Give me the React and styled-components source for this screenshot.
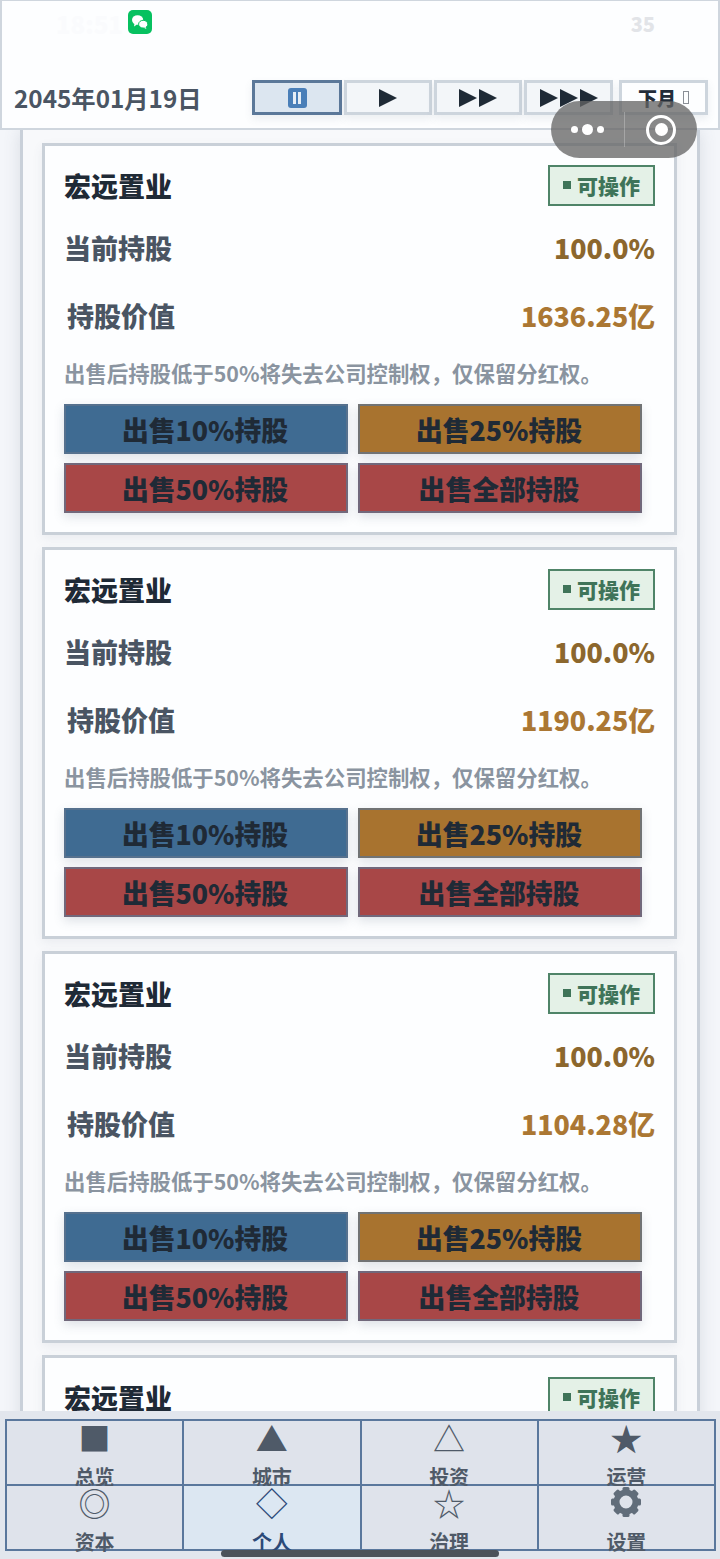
import React from 'react';
import styled, { createGlobalStyle } from 'styled-components';

const GlobalStyle = createGlobalStyle`
  html, body {
    margin: 0;
    padding: 0;
    background: #f3f6fa;
  }
  * {
    box-sizing: border-box;
  }
`;

const Page = styled.div`
  position: relative;
  width: 720px;
  height: 1559px;
  overflow: hidden;
  display: flex;
  flex-direction: column;
  background: #f4f6fa;
  font-family: "Noto Sans CJK SC", "Noto Sans", sans-serif;
  font-weight: 900;
`;

const Header = styled.header`
  position: relative;
  z-index: 1;
  height: 130px;
  flex: none;
  background: #fdfeff;
  border: 2px solid #cfd6de;
  border-top-width: 1px;
  display: flex;
  flex-direction: column;
`;

const StatusBar = styled.div`
  height: 79px;
  padding: 9px 63px 0 54px;
  display: flex;
  align-items: flex-start;
  gap: 5px;
`;

const Clock = styled.span`
  font-size: 24px;
  line-height: 28px;
  color: #fafbfd;
`;

const Battery = styled.span`
  margin-left: auto;
  font-size: 20px;
  line-height: 28px;
  color: #e2e4e8;
`;

const ControlRow = styled.div`
  display: flex;
  align-items: flex-start;
  padding: 0 10px 0 12px;
`;

const DateText = styled.div`
  width: 238px;
  font-size: 24.3px;
  font-weight: 700;
  line-height: 36px;
  color: #4a5563;
`;

const SpeedButtons = styled.div`
  display: flex;
  gap: 2px;
`;

const SpeedButton = styled.div`
  width: ${p => p.$width}px;
  height: 35px;
  display: flex;
  align-items: center;
  justify-content: center;
  background: ${p => (p.$active ? '#dce6f0' : '#f3f6f9')};
  border: 3px solid ${p => (p.$active ? '#5b7899' : '#cdd5dd')};
  box-shadow: 0 4px 8px rgba(80, 95, 115, 0.1);
`;

const NextButton = styled(SpeedButton)`
  margin-left: 6px;
  gap: 7px;
  background: #fdfeff;
  font-size: 19px;
  color: #232d39;
`;

const MissingGlyph = styled.span`
  width: 6px;
  height: 13px;
  border: 1px solid #8a8f96;
`;

const PauseBadge = styled.span`
  width: 19px;
  height: 20px;
  border-radius: 3px;
  background: #4a7fb8;
  display: flex;
  align-items: center;
  justify-content: center;
  gap: 2px;
  i {
    width: 3px;
    height: 12px;
    background: #e6eef6;
  }
`;

const Capsule = styled.div`
  position: absolute;
  z-index: 2;
  left: 551px;
  top: 101px;
  width: 146px;
  height: 57px;
  border-radius: 29px;
  background: rgba(100, 100, 100, 0.76);
  display: flex;
  align-items: center;
`;

const CapsuleDots = styled.div`
  width: 74px;
  height: 35px;
  display: flex;
  align-items: center;
  justify-content: center;
  gap: 4px;
  border-right: 1px solid rgba(255, 255, 255, 0.25);
`;

const Dot = styled.span`
  width: ${p => p.$size}px;
  height: ${p => p.$size}px;
  border-radius: 50%;
  background: #fff;
`;

const CapsuleTarget = styled.div`
  margin-left: 21px;
  width: 30px;
  height: 30px;
  border-radius: 50%;
  border: 3px solid #fff;
  display: flex;
  align-items: center;
  justify-content: center;
  &::after {
    content: '';
    width: 13px;
    height: 13px;
    border-radius: 50%;
    background: #fff;
  }
`;

const Panel = styled.main`
  flex: 1;
  min-height: 0;
  overflow: hidden;
  margin: 0 20px;
  padding: 13px 20px 0 19px;
  background: #f8f9fb;
  border-left: 3px solid #c9d0d9;
  border-right: 3px solid #c9d0d9;
  display: flex;
  flex-direction: column;
  gap: 12px;
  box-shadow: 0 0 16px rgba(80, 95, 115, 0.16);
`;

const Card = styled.section`
  flex: none;
  width: 635px;
  height: 392px;
  padding: 19px 19px;
  background: #fdfeff;
  border: 3px solid #c9d0d8;
  box-shadow: 0 4px 10px rgba(80, 95, 115, 0.08);
  display: flex;
  flex-direction: column;
`;

const TitleRow = styled.div`
  height: 41px;
  flex: none;
  display: flex;
  align-items: center;
  justify-content: space-between;
`;

const Title = styled.h3`
  margin: 0;
  font-size: 27px;
  line-height: 40px;
  font-weight: 900;
  color: #1f2a36;
`;

const Badge = styled.span`
  width: 107px;
  height: 41px;
  padding-bottom: 2px;
  display: flex;
  align-items: center;
  justify-content: center;
  gap: 6px;
  background: #e4f1e7;
  border: 2px solid #4f8468;
  font-size: 21px;
  color: #3f7459;
  &::before {
    content: '';
    width: 8px;
    height: 8px;
    background: #3f7459;
  }
`;

const StatRow = styled.div`
  height: 44px;
  flex: none;
  margin-top: ${p => p.$gap}px;
  padding-left: ${p => p.$indent}px;
  display: flex;
  align-items: center;
  justify-content: space-between;
`;

const StatLabel = styled.span`
  font-size: 27px;
  color: #4a5563;
`;

const StatValue = styled.span`
  font-size: 26.8px;
  color: ${p => p.$color};
`;

const Note = styled.p`
  margin: 21px 0 0;
  font-size: 21.4px;
  font-weight: 700;
  line-height: 30px;
  color: #8a94a0;
`;

const ButtonGrid = styled.div`
  margin: 16px 0 0;
  display: grid;
  grid-template-columns: 284px 284px;
  grid-auto-rows: 50px;
  gap: 9px 10px;
`;

const SellButton = styled.div`
  display: flex;
  align-items: center;
  justify-content: center;
  padding-right: 2px;
  background: ${p => p.$bg};
  border: 2px solid rgba(95, 115, 140, 0.75);
  font-size: 26.8px;
  color: #1f2a36;
  box-shadow: 0 4px 10px rgba(80, 95, 115, 0.18);
`;

const TabBar = styled.nav`
  position: absolute;
  z-index: 1;
  left: 0;
  right: 0;
  bottom: 0;
  height: 148px;
  padding: 8px 4px 0 5px;
  background: #e2e6ed;
`;

const TabGrid = styled.div`
  display: grid;
  grid-template-columns: repeat(4, 1fr);
  grid-template-rows: 65px 65px;
  border: 2px solid #5a779c;
  border-width: 2px 0 0 2px;
`;

const Tab = styled.div`
  border: 2px solid #5a779c;
  border-width: 0 2px 2px 0;
  background: ${p => (p.$active ? '#dce7f2' : '#dfe3eb')};
  display: flex;
  flex-direction: column;
  align-items: center;
  color: ${p => (p.$active ? '#2c4a78' : '#4f5a68')};
`;

const TabIcon = styled.span`
  flex: none;
  height: 44px;
  font-family: "Noto Sans CJK SC", sans-serif;
  font-weight: 400;
  font-size: 32px;
  line-height: 32px;
`;

const GearSlot = styled.span`
  flex: none;
  height: 44px;
  padding-top: 1px;
`;

const TabLabel = styled.span`
  flex: none;
  font-size: 20px;
  font-weight: 700;
  line-height: 24px;
`;

const HomeBar = styled.div`
  position: absolute;
  z-index: 2;
  left: 221px;
  top: 1550px;
  width: 278px;
  height: 7px;
  border-radius: 4px;
  background: #4c525a;
`;

const Triangles = ({ count }) => (
  <svg width={count * 20 - 2} height="18" viewBox={`0 0 ${count * 20 - 2} 18`}>
    {Array.from({ length: count }, (_, i) => (
      <path key={i} d={`M${i * 20} 0L${i * 20 + 18} 9L${i * 20} 18Z`} fill="#1f2a36" />
    ))}
  </svg>
);

const WechatIcon = () => (
  <svg width="24" height="24" viewBox="0 0 24 24">
    <rect width="24" height="24" rx="5" fill="#07c160" />
    <ellipse cx="9.6" cy="10" rx="5.6" ry="4.8" fill="#fff" />
    <path d="M6.5 13.5L6 16.4L9 14.6Z" fill="#fff" />
    <ellipse cx="15.2" cy="14.2" rx="4.6" ry="3.9" fill="#fff" stroke="#07c160" strokeWidth="1" />
    <path d="M17.6 17L18.4 19L15.8 17.8Z" fill="#fff" />
  </svg>
);

const GearIcon = () => (
  <svg width="30" height="30" viewBox="0 0 30 30">
    <g fill="#616d7a">
      {[0, 45, 90, 135, 180, 225, 270, 315].map(a => (
        <rect key={a} x="11.5" y="0" width="7" height="8" rx="1.5" transform={`rotate(${a} 15 15)`} />
      ))}
    </g>
    <circle cx="15" cy="15" r="9.5" fill="none" stroke="#616d7a" strokeWidth="6" />
  </svg>
);

const cards = ['1636.25亿', '1190.25亿', '1104.28亿', '1020.00亿'];

const sells = [
  { label: '出售10%持股', bg: '#3f6b92' },
  { label: '出售25%持股', bg: '#a8732f' },
  { label: '出售50%持股', bg: '#a84747' },
  { label: '出售全部持股', bg: '#a84747' },
];

const tabs = [
  { icon: '■', label: '总览' },
  { icon: '▲', label: '城市' },
  { icon: '△', label: '投资' },
  { icon: '★', label: '运营' },
  { icon: '◎', label: '资本' },
  { icon: '◇', label: '个人', active: true },
  { icon: '☆', label: '治理' },
  { gear: true, label: '设置' },
];

export default function App() {
  return (
    <Page>
      <GlobalStyle />
      <Header>
        <StatusBar>
          <Clock>18:51</Clock>
          <WechatIcon />
          <Battery>35</Battery>
        </StatusBar>
        <ControlRow>
          <DateText>2045年01月19日</DateText>
          <SpeedButtons>
            <SpeedButton $width={90} $active>
              <PauseBadge><i /><i /></PauseBadge>
            </SpeedButton>
            <SpeedButton $width={88}><Triangles count={1} /></SpeedButton>
            <SpeedButton $width={88}><Triangles count={2} /></SpeedButton>
            <SpeedButton $width={89}><Triangles count={3} /></SpeedButton>
          </SpeedButtons>
          <NextButton $width={89}>下月<MissingGlyph /></NextButton>
        </ControlRow>
      </Header>

      <Panel>
        {cards.map((value, i) => (
          <Card key={i}>
            <TitleRow>
              <Title>宏远置业</Title>
              <Badge>可操作</Badge>
            </TitleRow>
            <StatRow $gap={19} $indent={0}>
              <StatLabel>当前持股</StatLabel>
              <StatValue $color="#8c672d">100.0%</StatValue>
            </StatRow>
            <StatRow $gap={24} $indent={3}>
              <StatLabel>持股价值</StatLabel>
              <StatValue $color="#ab7733">{value}</StatValue>
            </StatRow>
            <Note>出售后持股低于50%将失去公司控制权，仅保留分红权。</Note>
            <ButtonGrid>
              {sells.map(s => (
                <SellButton key={s.label} $bg={s.bg}>{s.label}</SellButton>
              ))}
            </ButtonGrid>
          </Card>
        ))}
      </Panel>

      <Capsule>
        <CapsuleDots>
          <Dot $size={7} />
          <Dot $size={11} />
          <Dot $size={7} />
        </CapsuleDots>
        <CapsuleTarget />
      </Capsule>

      <TabBar>
        <TabGrid>
          {tabs.map(t => (
            <Tab key={t.label} $active={t.active}>
              {t.gear ? <GearSlot><GearIcon /></GearSlot> : <TabIcon>{t.icon}</TabIcon>}
              <TabLabel>{t.label}</TabLabel>
            </Tab>
          ))}
        </TabGrid>
      </TabBar>
      <HomeBar />
    </Page>
  );
}
